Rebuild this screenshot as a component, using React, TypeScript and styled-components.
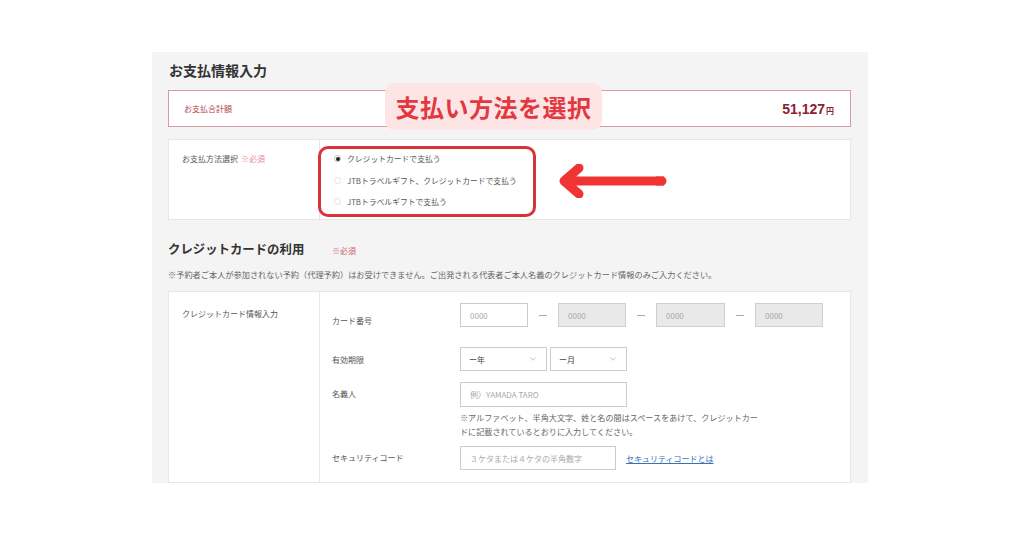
import React from "react";
import styled, { createGlobalStyle } from "styled-components";
import { ChevronDown } from "lucide-react";

const GlobalStyle = createGlobalStyle`
  html, body { margin: 0; padding: 0; background: #ffffff; }
  body { font-family: "Noto Sans CJK JP", "Noto Sans", sans-serif; color: #333; }
  * { box-sizing: border-box; }
`;

const Page = styled.div`
  padding: 52px 0 0 152px;
`;

const Panel = styled.div`
  position: relative;
  width: 716px;
  background: #f4f4f4;
  padding: 8px 17px 0 16px;
`;

const Title = styled.h1`
  margin: 0 0 10px 1px;
  font-size: 14px;
  line-height: 20px;
  font-weight: 700;
  color: #333;
`;

const SummaryBox = styled.div`
  height: 37px;
  background: #fff;
  border: 1px solid #d69ba1;
  display: flex;
  align-items: center;
  justify-content: space-between;
  padding: 0 16px 0 15px;
`;

const SummaryLabel = styled.span`
  font-size: 8px;
  color: #b2404c;
`;

const Amount = styled.span`
  font-family: "Liberation Sans", Arial, sans-serif;
  font-weight: 700;
  font-size: 14px;
  color: #8b2232;
`;

const Yen = styled.span`
  font-family: "Noto Sans CJK JP", sans-serif;
  font-size: 8px;
  font-weight: 700;
  margin-left: 1px;
`;

const Callout = styled.div`
  position: absolute;
  left: 233px;
  top: 31px;
  width: 217px;
  height: 47px;
  border-radius: 9px;
  background: rgba(253, 228, 228, 0.96);
  display: flex;
  align-items: center;
  justify-content: center;
  font-size: 24px;
  font-weight: 700;
  color: #e2383f;
  letter-spacing: 0.5px;
`;

const Box = styled.div<{ $height?: number }>`
  position: relative;
  display: flex;
  background: #fff;
  border: 1px solid #e6e6e6;
  ${(p) => (p.$height ? `height: ${p.$height}px;` : "")}
`;

const PaymentBox = styled(Box)`
  margin-top: 12px;
`;

const LabelCell = styled.div<{ $top: number }>`
  width: 151px;
  flex: none;
  border-right: 1px solid #e6e6e6;
  padding: ${(p) => p.$top}px 10px 0 13px;
  font-size: 8px;
  line-height: 12px;
  color: #555;
  white-space: nowrap;
`;

const Required = styled.span`
  color: #e08a92;
  margin-left: 3px;
`;

const OptionsCell = styled.div`
  position: relative;
  padding: 8px 0 0 14px;
`;

const Option = styled.label`
  display: flex;
  align-items: center;
  height: 21.5px;
  font-size: 7.8px;
  color: #555;
  white-space: nowrap;
`;

const Radio = styled.span<{ $checked?: boolean }>`
  width: 7px;
  height: 7px;
  border-radius: 50%;
  border: 1px solid ${(p) => (p.$checked ? "#bbb" : "#e2e2e2")};
  background: #fff;
  margin-right: 6px;
  display: flex;
  align-items: center;
  justify-content: center;
  &::after {
    content: "";
    width: 4px;
    height: 4px;
    border-radius: 50%;
    background: ${(p) => (p.$checked ? "#222" : "transparent")};
  }
`;

const Highlight = styled.div`
  position: absolute;
  left: -2px;
  top: 6px;
  width: 218px;
  height: 71px;
  border: 3px solid #d8323a;
  border-radius: 10px;
  pointer-events: none;
`;

const Arrow = styled.svg`
  position: absolute;
  left: 387px;
  top: 24px;
`;

const SectionHead = styled.div`
  display: flex;
  align-items: center;
  margin-top: 20px;
  height: 18px;
`;

const SectionTitle = styled.h2`
  margin: 0;
  font-size: 12.4px;
  line-height: 18px;
  font-weight: 700;
  color: #333;
  width: 164px;
`;

const SectionRequired = styled.span`
  font-size: 8px;
  color: #d0606a;
  padding-top: 3px;
`;

const Notice = styled.p`
  margin: 10px 0 11px;
  font-size: 8.2px;
  line-height: 12px;
  color: #666;
  white-space: nowrap;
`;

const FormCell = styled.div`
  padding: 11px 0 12px 12px;
  flex: 1;
`;

const Row = styled.div<{ $mt?: number }>`
  display: flex;
  align-items: flex-start;
  margin-top: ${(p) => p.$mt ?? 0}px;
`;

const RowLabel = styled.div<{ $top: number }>`
  width: 128px;
  flex: none;
  padding-top: ${(p) => p.$top}px;
  font-size: 8px;
  line-height: 12px;
  color: #555;
`;

const Field = styled.div<{ $w: number; $h?: number; $disabled?: boolean }>`
  width: ${(p) => p.$w}px;
  height: ${(p) => p.$h ?? 24}px;
  border: 1px solid ${(p) => (p.$disabled ? "#cfcfcf" : "#cccccc")};
  background: ${(p) => (p.$disabled ? "#e9e9e9" : "#fff")};
  display: flex;
  align-items: center;
  padding: 0 9px;
  font-size: 8px;
  color: #a8a8a8;
  font-family: "Noto Sans CJK JP", sans-serif;
  white-space: nowrap;
`;

const SelectBox = styled(Field)`
  justify-content: space-between;
  color: #444;
  padding: 0 8px 0 8px;
`;

const Dash = styled.span`
  width: 30px;
  display: flex;
  align-items: center;
  justify-content: center;
  height: 24px;
  &::before {
    content: "";
    width: 8px;
    height: 1px;
    background: #aaa;
  }
`;

const Group = styled.div<{ $gap?: number }>`
  display: flex;
  align-items: center;
  gap: ${(p) => p.$gap ?? 0}px;
`;

const Column = styled.div`
  display: flex;
  flex-direction: column;
`;

const Help = styled.p`
  margin: 4px 0 0;
  font-size: 8.1px;
  line-height: 14px;
  color: #666;
  white-space: nowrap;
`;

const Link = styled.a`
  margin-left: 10px;
  font-size: 8px;
  color: #3d6fb3;
  text-decoration: underline;
  white-space: nowrap;
`;

const Chevron = () => <ChevronDown size={10} color="#999" strokeWidth={1.5} />;

export default function App() {
  return (
    <>
      <GlobalStyle />
      <Page>
        <Panel>
          <Title>お支払情報入力</Title>
          <SummaryBox>
            <SummaryLabel>お支払合計額</SummaryLabel>
            <Amount>
              51,127<Yen>円</Yen>
            </Amount>
          </SummaryBox>
          <Callout>支払い方法を選択</Callout>

          <PaymentBox $height={81}>
            <LabelCell $top={13}>
              お支払方法選択<Required>※必須</Required>
            </LabelCell>
            <OptionsCell>
              <Option>
                <Radio $checked />
                クレジットカードで支払う
              </Option>
              <Option>
                <Radio />
                JTBトラベルギフト、クレジットカードで支払う
              </Option>
              <Option>
                <Radio />
                JTBトラベルギフトで支払う
              </Option>
              <Highlight />
            </OptionsCell>
            <Arrow width="112" height="34" viewBox="0 0 112 34">
              <path
                d="M106 17 H9 M23 4 L8 17 L23 30"
                fill="none"
                stroke="#f03434"
                strokeWidth="9"
                strokeLinecap="round"
                strokeLinejoin="round"
              />
              <rect x="100" y="12.5" width="8" height="9" fill="#f03434" />
            </Arrow>
          </PaymentBox>

          <SectionHead>
            <SectionTitle>クレジットカードの利用</SectionTitle>
            <SectionRequired>※必須</SectionRequired>
          </SectionHead>
          <Notice>
            ※予約者ご本人が参加されない予約（代理予約）はお受けできません。ご出発される代表者ご本人名義のクレジットカード情報のみご入力ください。
          </Notice>

          <Box>
            <LabelCell $top={16}>クレジットカード情報入力</LabelCell>
            <FormCell>
              <Row>
                <RowLabel $top={12}>カード番号</RowLabel>
                <Group>
                  <Field $w={68}>0000</Field>
                  <Dash />
                  <Field $w={68} $disabled>0000</Field>
                  <Dash />
                  <Field $w={69} $disabled>0000</Field>
                  <Dash />
                  <Field $w={68} $disabled>0000</Field>
                </Group>
              </Row>
              <Row $mt={20}>
                <RowLabel $top={7}>有効期限</RowLabel>
                <Group $gap={3}>
                  <SelectBox $w={87}>
                    ー年
                    <Chevron />
                  </SelectBox>
                  <SelectBox $w={77}>
                    ー月
                    <Chevron />
                  </SelectBox>
                </Group>
              </Row>
              <Row $mt={11}>
                <RowLabel $top={6}>名義人</RowLabel>
                <Column>
                  <Field $w={167} $h={25}>例）YAMADA TARO</Field>
                  <Help>
                    ※アルファベット、半角大文字、姓と名の間はスペースをあけて、クレジットカー
                    <br />
                    ドに記載されているとおりに入力してください。
                  </Help>
                </Column>
              </Row>
              <Row $mt={7}>
                <RowLabel $top={6}>セキュリティコード</RowLabel>
                <Group>
                  <Field $w={156}>３ケタまたは４ケタの半角数字</Field>
                  <Link href="#">セキュリティコードとは</Link>
                </Group>
              </Row>
            </FormCell>
          </Box>
        </Panel>
      </Page>
    </>
  );
}
